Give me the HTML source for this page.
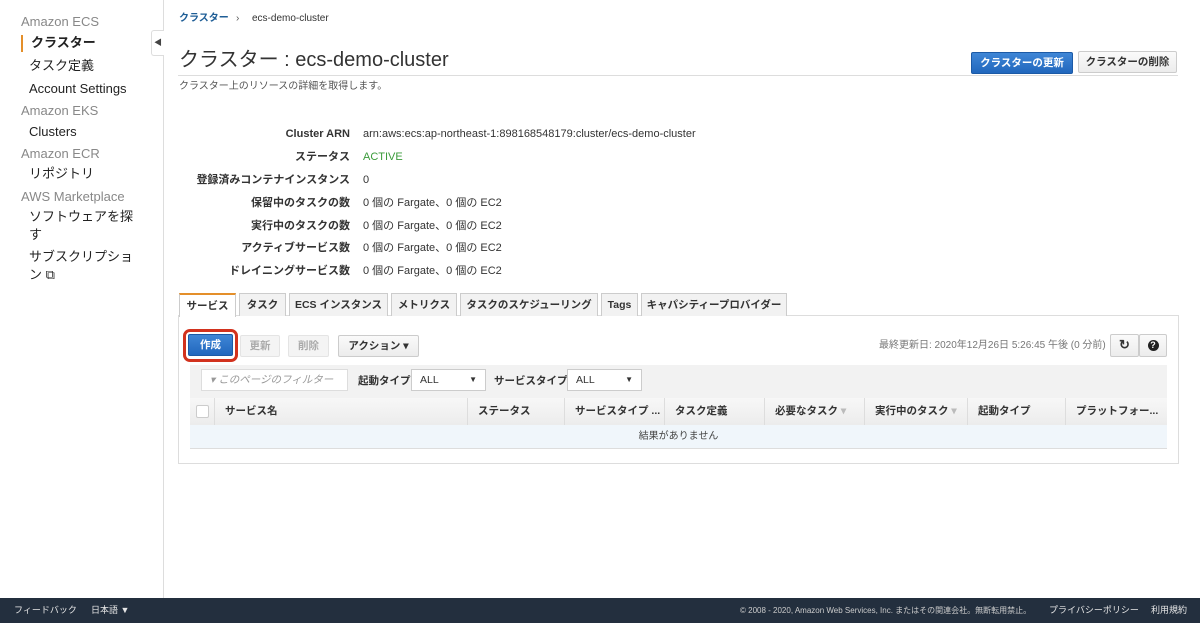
<!DOCTYPE html>
<html><head><meta charset="utf-8"><style>
*{box-sizing:border-box;margin:0;padding:0}
body{width:1200px;height:623px;overflow:hidden;background:#fff;font-family:"Liberation Sans","Noto Sans CJK JP",sans-serif;color:#333;position:relative;font-size:11px;line-height:14px}
.abs{position:absolute;white-space:nowrap}
.side{position:absolute;left:0;top:0;width:164px;height:598px;border-right:1px solid #ddd}
.sh{position:absolute;left:21px;color:#888;font-size:13px;line-height:16px}
.si{position:absolute;left:29px;color:#222;font-size:13px;line-height:16px}
.lab{position:absolute;right:850px;font-weight:bold;font-size:11px;color:#333;white-space:nowrap;line-height:14px}
.val{position:absolute;left:363px;font-size:11px;color:#333;white-space:nowrap;line-height:14px}
.tab{position:absolute;top:293px;height:23px;border:1px solid #ccc;border-bottom:none;background:#f2f2f2;font-weight:bold;font-size:10.5px;line-height:22px;text-align:center;color:#333}
.btn{position:absolute;height:22px;border:1px solid #ccc;border-radius:2px;background:linear-gradient(#fafafa,#ececec);font-size:10.5px;font-weight:bold;line-height:20px;text-align:center;color:#333}
.th{position:absolute;top:398px;height:27px;line-height:27px;font-size:10.5px;font-weight:bold;padding-left:10px;border-right:1px solid #ddd;color:#333}
.sel{position:absolute;height:22px;border:1px solid #ccc;background:#fff;font-size:10.5px;line-height:20px;padding-left:8px}
</style></head><body>
<div class="side">
<div class="sh" style="top:14px">Amazon ECS</div>
<div style="position:absolute;left:21px;top:35px;width:2px;height:17px;background:#e48f2a"></div>
<div class="si" style="top:35px;left:31px;font-weight:bold">クラスター</div>
<div class="si" style="top:58px">タスク定義</div>
<div class="si" style="top:81px">Account Settings</div>
<div class="sh" style="top:103px">Amazon EKS</div>
<div class="si" style="top:124px">Clusters</div>
<div class="sh" style="top:146px">Amazon ECR</div>
<div class="si" style="top:166px">リポジトリ</div>
<div class="sh" style="top:189px">AWS Marketplace</div>
<div class="si" style="top:209px">ソフトウェアを探</div>
<div class="si" style="top:227px">す</div>
<div class="si" style="top:249px">サブスクリプショ</div>
<div class="si" style="top:267px">ン ⧉</div>
</div>
<div style="position:absolute;left:151px;top:30px;width:13px;height:26px;border:1px solid #ddd;border-right:none;background:#fff;border-radius:3px 0 0 3px;font-size:8px;line-height:24px;text-align:center;color:#444">◀</div>
<div class="abs" style="left:179px;top:12px;font-size:10px;color:#1f5e96;font-weight:bold">クラスター</div>
<div class="abs" style="left:236px;top:12px;font-size:10px;color:#555">›</div>
<div class="abs" style="left:252px;top:12px;font-size:10px;color:#333">ecs-demo-cluster</div>
<div class="abs" style="left:179px;top:48px;font-size:20px;line-height:24px;color:#333">クラスター : ecs-demo-cluster</div>
<div style="position:absolute;left:178px;top:75px;width:1000px;height:1px;background:#ddd"></div>
<div class="abs" style="left:179px;top:80px;font-size:10px;color:#555">クラスター上のリソースの詳細を取得します。</div>
<div class="btn" style="left:971px;top:52px;width:102px;height:22px;background:linear-gradient(#3f86d6,#2167bd);border-color:#1c5aa6;color:#fff">クラスターの更新</div>
<div class="btn" style="left:1078px;top:51px;width:99px;height:22px">クラスターの削除</div>
<div class="lab" style="top:127px">Cluster ARN</div><div class="val" style="top:127px">arn:aws:ecs:ap-northeast-1:898168548179:cluster/ecs-demo-cluster</div>
<div class="lab" style="top:150px">ステータス</div><div class="val" style="top:150px;color:#3a9b3a">ACTIVE</div>
<div class="lab" style="top:173px">登録済みコンテナインスタンス</div><div class="val" style="top:173px">0</div>
<div class="lab" style="top:196px">保留中のタスクの数</div><div class="val" style="top:196px">0 個の Fargate、0 個の EC2</div>
<div class="lab" style="top:219px">実行中のタスクの数</div><div class="val" style="top:219px">0 個の Fargate、0 個の EC2</div>
<div class="lab" style="top:241px">アクティブサービス数</div><div class="val" style="top:241px">0 個の Fargate、0 個の EC2</div>
<div class="lab" style="top:264px">ドレイニングサービス数</div><div class="val" style="top:264px">0 個の Fargate、0 個の EC2</div>
<div style="position:absolute;left:178px;top:315px;width:1001px;height:149px;border:1px solid #ddd"></div>
<div class="tab" style="left:179px;width:57px;background:#fff;border-top:2px solid #e48f2a;height:24px">サービス</div>
<div class="tab" style="left:239px;width:47px">タスク</div>
<div class="tab" style="left:289px;width:99px">ECS インスタンス</div>
<div class="tab" style="left:391px;width:66px">メトリクス</div>
<div class="tab" style="left:460px;width:138px">タスクのスケジューリング</div>
<div class="tab" style="left:601px;width:37px">Tags</div>
<div class="tab" style="left:641px;width:146px">キャパシティープロバイダー</div>
<div style="position:absolute;left:183px;top:329px;width:55px;height:33px;border:3px solid #d2321e;border-radius:7px"></div>
<div class="btn" style="left:188px;top:334px;width:45px;background:linear-gradient(#3f86d6,#2167bd);border-color:#1c5aa6;color:#fff">作成</div>
<div class="btn" style="left:240px;top:335px;width:40px;color:#aaa;border-color:#e4e4e4;background:#f4f4f4">更新</div>
<div class="btn" style="left:288px;top:335px;width:41px;color:#aaa;border-color:#e4e4e4;background:#f4f4f4">削除</div>
<div class="btn" style="left:338px;top:335px;width:81px">アクション ▾</div>
<div class="abs" style="left:879px;top:339px;font-size:10px;color:#777">最終更新日: 2020年12月26日 5:26:45 午後 (0 分前)</div>
<div class="btn" style="left:1110px;top:334px;width:29px;height:23px;font-size:13px">↻</div>
<div class="btn" style="left:1139px;top:334px;width:28px;height:23px"><span style="display:inline-block;width:11px;height:11px;border-radius:50%;background:#222;color:#fff;font-size:9px;line-height:11px;margin-top:5px;vertical-align:top">?</span></div>
<div style="position:absolute;left:190px;top:365px;width:977px;height:33px;background:#f2f2f2"></div>
<div class="sel" style="left:201px;top:369px;width:147px;color:#999;font-style:italic;border-color:#ddd">▾ このページのフィルター</div>
<div class="abs" style="left:358px;top:374px;font-size:10.5px;font-weight:bold">起動タイプ</div>
<div class="sel" style="left:411px;top:369px;width:75px">ALL<span style="position:absolute;right:8px;font-size:8px">▼</span></div>
<div class="abs" style="left:494px;top:374px;font-size:10.5px;font-weight:bold">サービスタイプ</div>
<div class="sel" style="left:567px;top:369px;width:75px">ALL<span style="position:absolute;right:8px;font-size:8px">▼</span></div>
<div style="position:absolute;left:190px;top:398px;width:977px;height:27px;background:linear-gradient(#f7f7f7,#ececec)"></div>
<div class="th" style="left:190px;width:25px;padding:0"><div style="position:absolute;left:6px;top:7px;width:13px;height:13px;border:1px solid #ccc;background:#fff;border-radius:2px"></div></div>
<div class="th" style="left:215px;width:253px">サービス名</div>
<div class="th" style="left:468px;width:97px">ステータス</div>
<div class="th" style="left:565px;width:100px">サービスタイプ ...</div>
<div class="th" style="left:665px;width:100px">タスク定義</div>
<div class="th" style="left:765px;width:100px">必要なタスク <span style="color:#bbb">▾</span></div>
<div class="th" style="left:865px;width:103px">実行中のタスク <span style="color:#bbb">▾</span></div>
<div class="th" style="left:968px;width:98px">起動タイプ</div>
<div class="th" style="left:1066px;width:101px;border:none">プラットフォー...</div>
<div style="position:absolute;left:190px;top:425px;width:977px;height:24px;background:#f0f6fb;border-bottom:1px solid #ddd;text-align:center;font-size:10px;line-height:23px;color:#444">結果がありません</div>
<div style="position:absolute;left:0;top:598px;width:1200px;height:25px;background:#232f3e;color:#e6e6e6;font-size:9px;line-height:25px">
<span class="abs" style="left:14px;line-height:25px">フィードバック</span>
<span class="abs" style="left:91px;line-height:25px">日本語 ▼</span>
<span class="abs" style="left:740px;font-size:8px;color:#ccc;line-height:25px">© 2008 - 2020, Amazon Web Services, Inc. またはその関連会社。無断転用禁止。</span>
<span class="abs" style="left:1049px;line-height:25px">プライバシーポリシー</span>
<span class="abs" style="left:1151px;line-height:25px">利用規約</span>
</div>
</body></html>
